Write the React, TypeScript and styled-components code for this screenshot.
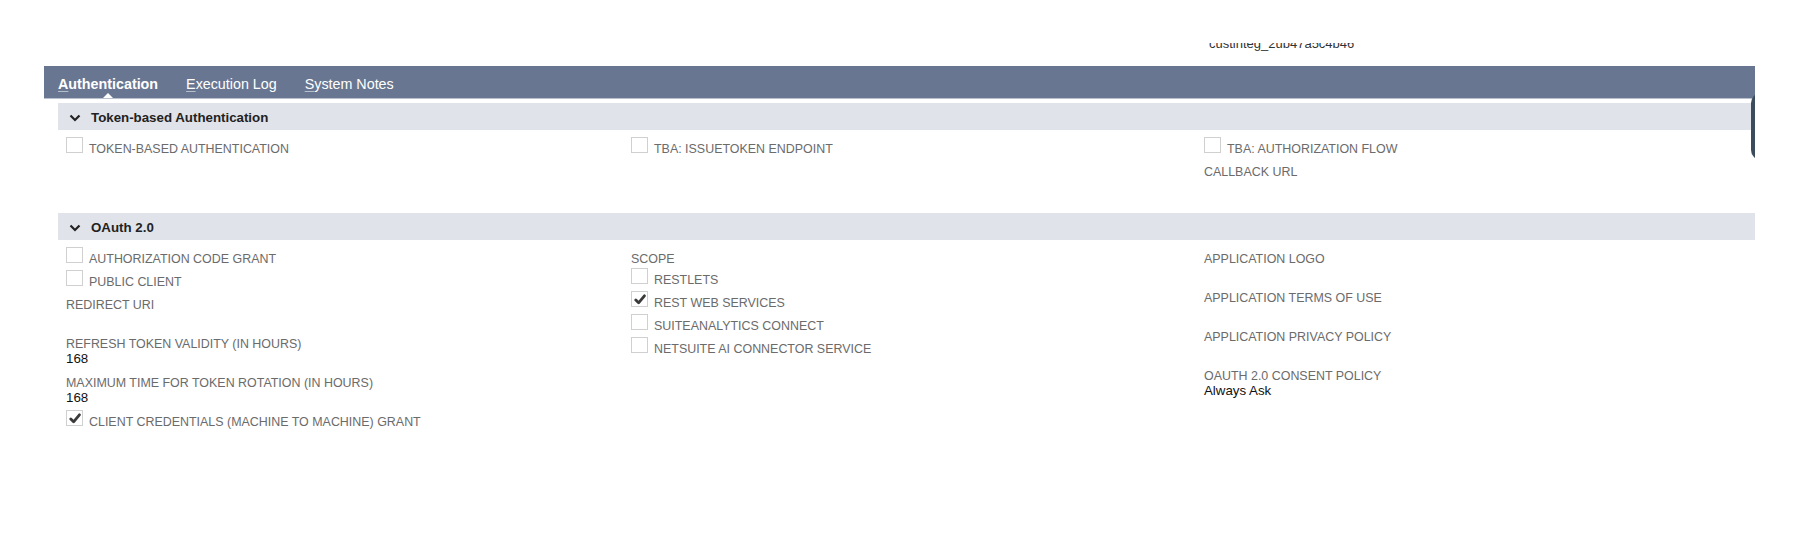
import React from 'react';
import styled, { createGlobalStyle } from 'styled-components';

const GlobalStyle = createGlobalStyle`
  body {
    margin: 0;
    background: #fff;
    font-family: "Liberation Sans", Arial, Helvetica, sans-serif;
  }
`;

const Page = styled.div`
  width: 1814px;
  height: 560px;
  overflow: hidden;
  background: #fff;
`;

const TopStrip = styled.div`
  box-sizing: border-box;
  height: 66px;
  padding: 43px 0 0 1209px;
`;

const ClippedValue = styled.div`
  height: 9px;
  overflow: hidden;
`;

const ClippedText = styled.div`
  margin-top: -7px;
  font-size: 13px;
  line-height: 16px;
  color: #333;
`;

const Panel = styled.div`
  position: relative;
  margin: 0 59px 0 44px;
  overflow: hidden;
`;

const SideHandle = styled.div`
  position: absolute;
  top: 27px;
  left: calc(100% - 4px);
  width: 30px;
  height: 67px;
  border-radius: 10px;
  background: #3b4c5c;
`;

const TabBar = styled.div`
  display: flex;
  align-items: flex-start;
  gap: 28px;
  height: 32px;
  padding-left: 14px;
  background: #687692;
  border-bottom: 1px solid #b9c1cf;
`;

const Tab = styled.div<{ $active?: boolean }>`
  position: relative;
  box-sizing: border-box;
  height: 32px;
  padding-top: 2px;
  line-height: 32px;
  font-size: 14.3px;
  font-weight: ${(p) => (p.$active ? 700 : 400)};
  color: #fff;
  white-space: nowrap;

  u {
    text-decoration: underline;
    text-decoration-color: #b8bfcc;
    text-underline-offset: 2px;
  }

  ${(p) =>
    p.$active &&
    `
    &::after {
      content: '';
      position: absolute;
      left: 50%;
      bottom: 0;
      margin-left: -5px;
      border-left: 5px solid transparent;
      border-right: 5px solid transparent;
      border-bottom: 5px solid #fff;
    }
  `}
`;

const Body = styled.div`
  padding-left: 14px;
`;

const Section = styled.div`
  margin-top: 4px;
`;

const SectionHeader = styled.div`
  box-sizing: border-box;
  display: flex;
  align-items: center;
  gap: 10px;
  height: 27px;
  padding: 2px 0 0 11px;
  background: #e0e3e9;
  font-size: 13.3px;
  font-weight: 700;
  color: #222;
`;

const SectionBody = styled.div`
  display: grid;
  grid-template-columns: 565px 573px 1fr;
  padding: 8px 0 9px 8px;
`;

const Column = styled.div`
  display: flex;
  flex-direction: column;
`;

const CheckRow = styled.div`
  display: flex;
  align-items: flex-start;
  height: 18px;
  margin-bottom: 5px;
`;

const Box = styled.div`
  box-sizing: border-box;
  display: flex;
  align-items: center;
  justify-content: center;
  width: 17px;
  height: 16px;
  margin: -1px 6px 0 0;
  border: 1px solid #d0d0d0;
  background: #fff;
`;

const Label = styled.div`
  font-size: 12.45px;
  line-height: 14px;
  color: #6b6b6b;
  white-space: nowrap;
`;

const CheckLabel = styled(Label)`
  margin-top: 4px;
`;

const Field = styled.div`
  padding-top: 4px;
  margin-bottom: 5px;
`;

const Value = styled.div`
  min-height: 16px;
  font-size: 13.3px;
  line-height: 15px;
  color: #111;
`;

const ScopeList = styled.div`
  margin-top: 3px;
`;

const Chevron = () => (
  <svg width="12" height="8" viewBox="0 0 12 8">
    <polyline points="1.5,1.5 6,6 10.5,1.5" fill="none" stroke="#222" strokeWidth="2.2" />
  </svg>
);

const Tick = () => (
  <svg width="12" height="11" viewBox="0 0 12 11">
    <path d="M1.8 6 L4.6 8.8 L10.4 1.8" fill="none" stroke="#3a3a3a" strokeWidth="2.8" strokeLinecap="round" strokeLinejoin="round" />
  </svg>
);

const Check = ({ label, checked }: { label: string; checked?: boolean }) => (
  <CheckRow>
    <Box>{checked && <Tick />}</Box>
    <CheckLabel>{label}</CheckLabel>
  </CheckRow>
);

const TextField = ({ label, value }: { label: string; value?: string }) => (
  <Field>
    <Label>{label}</Label>
    <Value>{value}</Value>
  </Field>
);

export default function App() {
  return (
    <Page>
      <GlobalStyle />
      <TopStrip>
        <ClippedValue>
          <ClippedText>custinteg_2ub47a5c4b46</ClippedText>
        </ClippedValue>
      </TopStrip>

      <Panel>
        <SideHandle />
        <TabBar>
          <Tab $active>
            <u>A</u>uthentication
          </Tab>
          <Tab>
            <u>E</u>xecution Log
          </Tab>
          <Tab>
            <u>S</u>ystem Notes
          </Tab>
        </TabBar>

        <Body>
          <Section>
            <SectionHeader>
              <Chevron />
              Token-based Authentication
            </SectionHeader>
            <SectionBody>
              <Column>
                <Check label="TOKEN-BASED AUTHENTICATION" />
              </Column>
              <Column>
                <Check label="TBA: ISSUETOKEN ENDPOINT" />
              </Column>
              <Column>
                <Check label="TBA: AUTHORIZATION FLOW" />
                <TextField label="CALLBACK URL" />
              </Column>
            </SectionBody>
          </Section>

          <Section>
            <SectionHeader>
              <Chevron />
              OAuth 2.0
            </SectionHeader>
            <SectionBody>
              <Column>
                <Check label="AUTHORIZATION CODE GRANT" />
                <Check label="PUBLIC CLIENT" />
                <TextField label="REDIRECT URI" />
                <TextField label="REFRESH TOKEN VALIDITY (IN HOURS)" value="168" />
                <TextField label="MAXIMUM TIME FOR TOKEN ROTATION (IN HOURS)" value="168" />
                <Check label="CLIENT CREDENTIALS (MACHINE TO MACHINE) GRANT" checked />
              </Column>
              <Column>
                <Field>
                  <Label>SCOPE</Label>
                  <ScopeList>
                    <Check label="RESTLETS" />
                    <Check label="REST WEB SERVICES" checked />
                    <Check label="SUITEANALYTICS CONNECT" />
                    <Check label="NETSUITE AI CONNECTOR SERVICE" />
                  </ScopeList>
                </Field>
              </Column>
              <Column>
                <TextField label="APPLICATION LOGO" />
                <TextField label="APPLICATION TERMS OF USE" />
                <TextField label="APPLICATION PRIVACY POLICY" />
                <TextField label="OAUTH 2.0 CONSENT POLICY" value="Always Ask" />
              </Column>
            </SectionBody>
          </Section>
        </Body>
      </Panel>
    </Page>
  );
}
